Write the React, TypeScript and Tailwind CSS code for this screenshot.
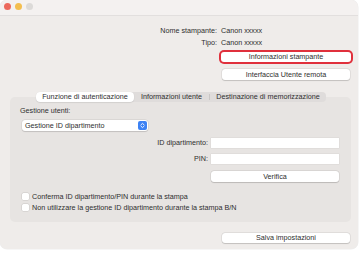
import React from "react";

const font = { fontFamily: '"Liberation Sans", Arial, sans-serif' };

function Btn({ children, focus = false, className = "" }: { children: React.ReactNode; focus?: boolean; className?: string }) {
  return (
    <div
      className={
        "flex items-center justify-center bg-white rounded-[3px] text-[7.2px] leading-none text-[#2e2e2e] shadow-[0_0_0_0.5px_rgba(0,0,0,0.1),0_0.5px_1px_rgba(0,0,0,0.14)] " +
        (focus ? "ring-2 ring-[#e0303c] " : "") +
        className
      }
    >
      {children}
    </div>
  );
}

function Field({ className = "" }: { className?: string }) {
  return <div className={"bg-white shadow-[0_0_0_0.5px_rgba(0,0,0,0.06)] " + className} />;
}

function Check({ label }: { label: string }) {
  return (
    <div className="flex items-center h-[11px]">
      <div className="w-[7px] h-[7px] ml-[2px] bg-white rounded-[1.5px] shadow-[0_0_0_0.5px_rgba(0,0,0,0.13)]" />
      <span className="ml-[3px] text-[7.2px] leading-none text-[#2e2e2e]">{label}</span>
    </div>
  );
}

export default function App() {
  return (
    <div className="w-[361px] h-[253px] bg-white" style={font}>
      <div className="w-[358px] h-[249px] rounded-[7px] bg-[#efecea] overflow-hidden shadow-[0_0_0_0.5px_rgba(0,0,0,0.07)] flex flex-col">
        {/* Title bar */}
        <div className="h-[16px] shrink-0 bg-[#f4f1f0] border-b border-[#e2dfde] flex items-center pl-[4px] gap-[4px] pb-[2px]">
          <div className="w-[7px] h-[7px] rounded-full bg-[#ec6a5e]" />
          <div className="w-[7px] h-[7px] rounded-full bg-[#f3be4f]" />
          <div className="w-[7px] h-[7px] rounded-full bg-[#dcdad8]" />
        </div>

        {/* Info */}
        <div className="pt-[9px] grid grid-cols-[217px_auto] gap-x-[4px] text-[7.2px] leading-none text-[#2e2e2e]">
          <div className="h-[12px] flex items-center justify-end">Nome stampante:</div>
          <div className="h-[12px] flex items-center">Canon xxxxx</div>
          <div className="h-[12px] flex items-center justify-end">Tipo:</div>
          <div className="h-[12px] flex items-center">Canon xxxxx</div>
        </div>

        <div className="pl-[221px] mt-[3px]">
          <Btn focus className="w-[130px] h-[10px]">Informazioni stampante</Btn>
        </div>
        <div className="pl-[222px] mt-[7px]">
          <Btn className="w-[128px] h-[11px]">Interfaccia Utente remota</Btn>
        </div>

        {/* Tabs */}
        <div className="mt-[12px] ml-[36px] relative z-10 flex h-[10px] w-[290px] rounded-[4px] bg-[#dfdcdb] text-[7.2px] leading-none text-[#2e2e2e]">
          <div className="w-[98px] h-full flex items-center justify-center bg-white rounded-[4px] shadow-[0_0.5px_1px_rgba(0,0,0,0.16)]">
            Funzione di autenticazione
          </div>
          <div className="w-[75px] h-full flex items-center justify-center">Informazioni utente</div>
          <div className="w-px h-[6px] self-center bg-[#c9c6c5]" />
          <div className="flex-1 h-full flex items-center justify-center">Destinazione di memorizzazione</div>
        </div>

        {/* Group box */}
        <div className="-mt-[5px] ml-[10px] w-[341px] h-[125px] rounded-[5px] bg-[#e7e4e2] pl-[10px] pt-[9px] text-[7.2px] leading-none text-[#2e2e2e] flex flex-col">
          <div className="h-[10px] flex items-center">Gestione utenti:</div>
          <div className="mt-[4px] ml-[2px] w-[126px] h-[11px] bg-white rounded-[3px] shadow-[0_0_0_0.5px_rgba(0,0,0,0.09),0_0.5px_1px_rgba(0,0,0,0.12)] flex items-center justify-between pl-[3px] pr-[1px]">
            <span>Gestione ID dipartimento</span>
            <div className="w-[9px] h-[9px] rounded-[2px] bg-[#3d82f4] flex items-center justify-center">
              <svg width="7" height="7" viewBox="0 0 7 7" fill="none" stroke="white" strokeWidth="0.9" strokeLinecap="round" strokeLinejoin="round">
                <path d="M2 2.8 L3.5 1.4 L5 2.8" />
                <path d="M2 4.2 L3.5 5.6 L5 4.2" />
              </svg>
            </div>
          </div>

          <div className="mt-[7px] grid grid-cols-[188px_128px] gap-x-[3px] gap-y-[6px]">
            <div className="h-[10px] flex items-center justify-end">ID dipartimento:</div>
            <Field className="h-[10px]" />
            <div className="h-[10px] flex items-center justify-end">PIN:</div>
            <Field className="h-[10px]" />
            <div />
            <Btn className="h-[11px] mt-[1px]">Verifica</Btn>
          </div>

          <div className="mt-[9px] flex flex-col">
            <Check label="Conferma ID dipartimento/PIN durante la stampa" />
            <Check label="Non utilizzare la gestione ID dipartimento durante la stampa B/N" />
          </div>
        </div>

        <div className="pl-[222px] mt-[11px]">
          <Btn className="w-[128px] h-[10px]">Salva impostazioni</Btn>
        </div>
      </div>
    </div>
  );
}
